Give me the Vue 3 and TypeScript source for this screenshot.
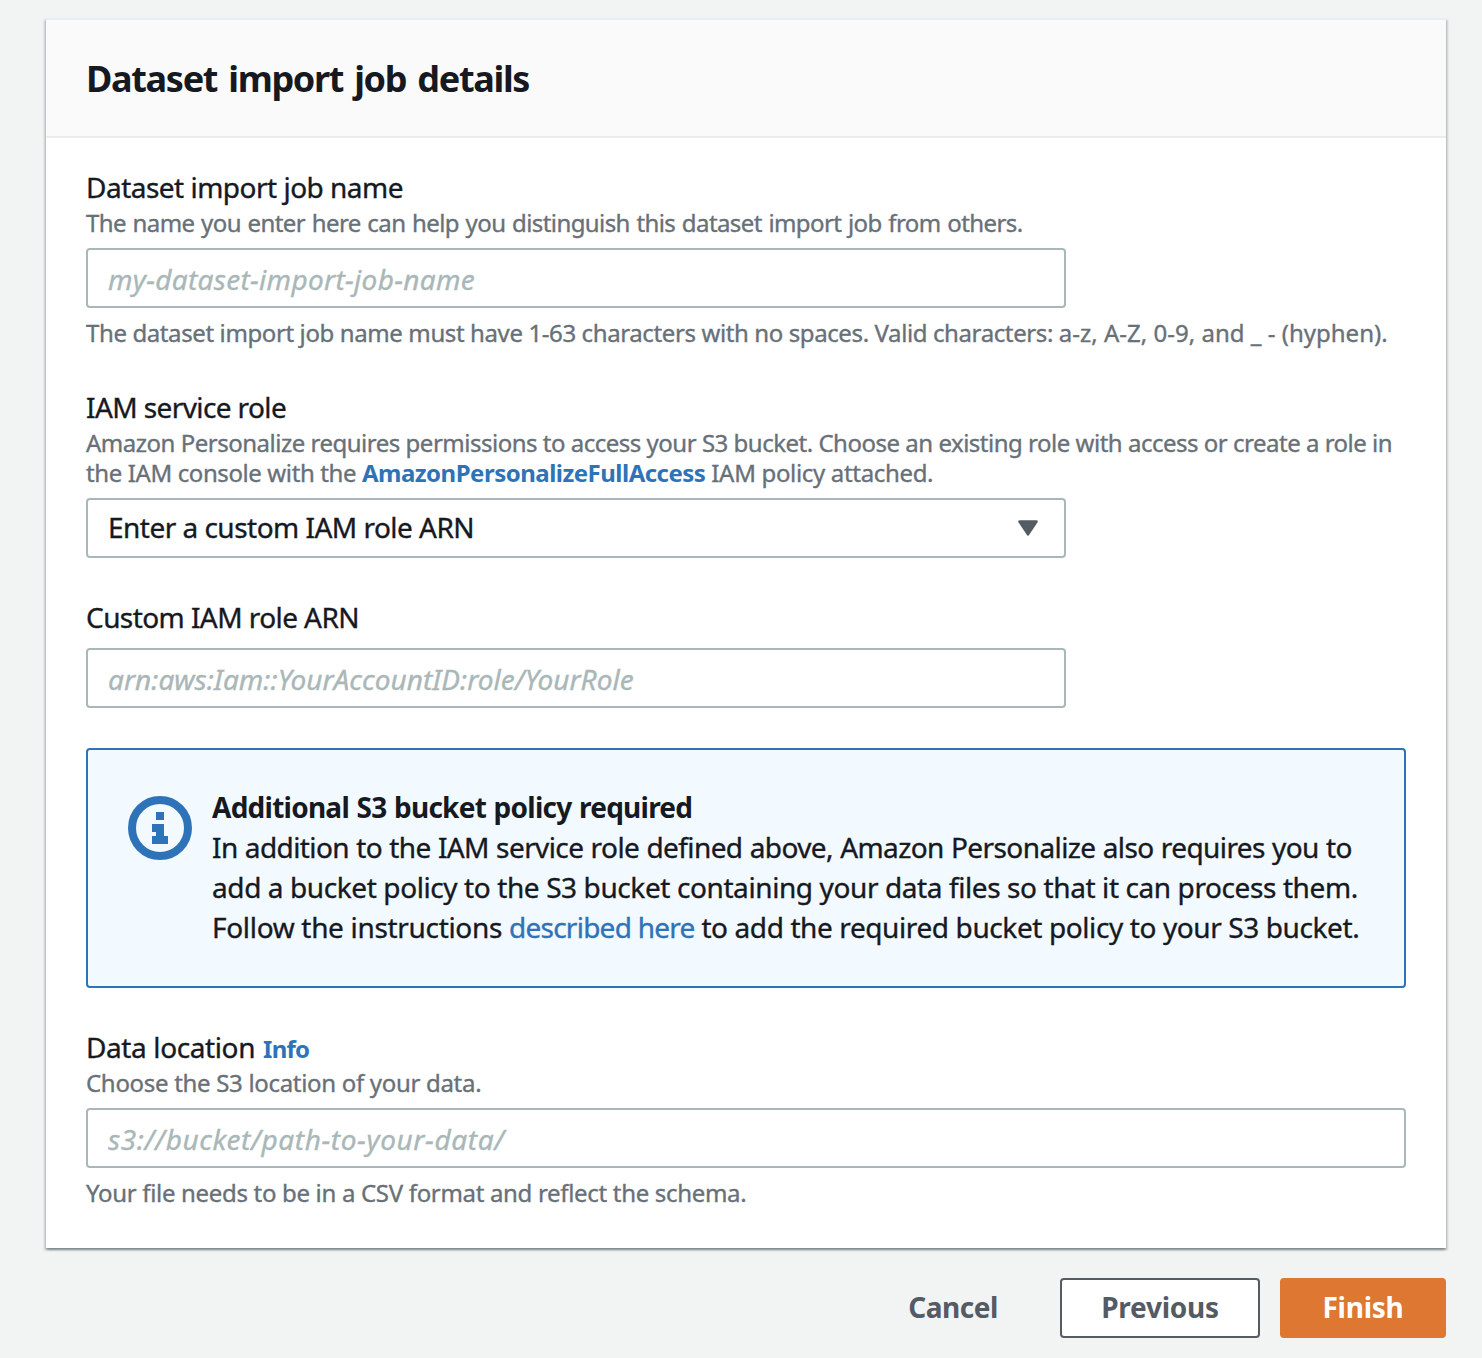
<script setup lang="ts">
import { ref } from 'vue'

const jobName = ref('')
const roleArn = ref('')
const dataLocation = ref('')
const roleOption = ref('Enter a custom IAM role ARN')
</script>

<template>
  <main class="page">
    <section class="panel">
      <header class="panel-header">
        <h2>Dataset import job details</h2>
      </header>

      <div class="panel-body">
        <div class="field">
          <label class="label name-label" for="job-name">Dataset import job name</label>
          <p class="desc name-desc">The name you enter here can help you distinguish this dataset import job from others.</p>
          <input id="job-name" v-model="jobName" class="control name-input" placeholder="my-dataset-import-job-name" />
          <p class="hint name-hint">The dataset import job name must have 1-63 characters with no spaces. Valid characters: <span>a-z, A-Z, 0-9, and _ - (hyphen).</span></p>
        </div>

        <div class="field">
          <span class="label role-label">IAM service role</span>
          <p class="desc">
            <span class="role-first">Amazon Personalize requires permissions to access your S3 bucket. Choose an existing role with access or create a role in</span><br />
            <span class="role-second">the IAM console with the </span><a class="policy-link">AmazonPersonalizeFullAccess</a><span class="role-third"> IAM policy attached.</span>
          </p>
          <button type="button" class="control select">
            <span>{{ roleOption }}</span>
            <svg width="20" height="16" viewBox="0 0 20 16" aria-hidden="true">
              <path d="M1.5 1.5H18.5L10 14.3Z" fill="#545b64" stroke="#545b64" stroke-width="2.6" stroke-linejoin="round" />
            </svg>
          </button>
        </div>

        <div class="field">
          <label class="label arn-label" for="role-arn">Custom IAM role ARN</label>
          <input id="role-arn" v-model="roleArn" class="control arn-input" placeholder="arn:aws:Iam::YourAccountID:role/YourRole" />
        </div>

        <aside class="alert">
          <svg class="alert-icon" width="64" height="64" viewBox="0 0 64 64" aria-hidden="true">
            <circle cx="32" cy="32" r="28" fill="none" stroke="#2e73b8" stroke-width="8" />
            <path d="M28 16h8v8h-8zM24 28h12v12h4v8H24v-8h4v-4h-4z" fill="#2e73b8" />
          </svg>
          <div class="alert-text">
            <strong>Additional S3 bucket policy required</strong>
            <p class="alert-one">In addition to the IAM service role defined above, Amazon Personalize also requires you to</p>
            <p class="alert-two">add a bucket policy to the S3 bucket containing your data files so that it can process them.</p>
            <p><span class="follow">Follow the instructions </span><a class="here-link">described here</a><span class="to-add"> to add the required bucket policy to your S3 bucket.</span></p>
          </div>
        </aside>

        <div class="field">
          <label class="label data-label" for="data-location"><span>Data location</span><a class="info">Info</a></label>
          <p class="desc data-desc">Choose the S3 location of your data.</p>
          <input id="data-location" v-model="dataLocation" class="control wide data-input" placeholder="s3://bucket/path-to-your-data/" />
          <p class="hint data-hint">Your file needs to be in a CSV format and reflect the schema.</p>
        </div>
      </div>
    </section>

    <footer class="actions">
      <button type="button" class="btn link">Cancel</button>
      <button type="button" class="btn normal">Previous</button>
      <button type="button" class="btn primary">Finish</button>
    </footer>
  </main>
</template>

<style>
body {
  background: #f2f4f4;
}
</style>

<style scoped>
.page {
  box-sizing: border-box;
  width: 1482px;
  height: 1358px;
  padding: 18px 36px 0 46px;
  background: #f2f4f3;
  color: #16191f;
  font: 28px/40px 'Noto Sans', sans-serif;
  white-space: nowrap;
}
h2,
p {
  margin: 0;
}
.panel {
  border-top: 2px solid #eaeded;
  background: #fff;
  box-shadow:
    0 2px 2px rgba(0, 28, 36, 0.3),
    2px 2px 2px rgba(0, 28, 36, 0.15),
    -2px 2px 2px rgba(0, 28, 36, 0.15);
}
.panel-header {
  box-sizing: border-box;
  height: 118px;
  padding: 35px 40px 0;
  background: #fafafa;
  border-bottom: 2px solid #eaeded;
}
h2 {
  font-size: 36px;
  line-height: 48px;
  font-weight: 700;
  letter-spacing: -1.31px;
  word-spacing: 3px;
}
.panel-body {
  display: flex;
  flex-direction: column;
  gap: 40px;
  padding: 30px 40px 40px;
  -webkit-text-stroke: 0.35px;
}
.field {
  display: flex;
  flex-direction: column;
  align-items: flex-start;
}
.label {
  display: block;
  height: 40px;
  line-height: 38px;
}
.desc,
.hint {
  color: #687078;
  font-size: 24px;
  line-height: 30px;
}
.hint {
  margin-top: 10px;
}
.control {
  box-sizing: border-box;
  width: 980px;
  height: 60px;
  margin: 10px 0 0;
  padding: 2px 20px 0;
  border: 2px solid #aab7b8;
  border-radius: 4px;
  background: #fff;
  color: #16191f;
  font: inherit;
  outline: none;
}
.control.wide {
  width: 1320px;
}
.control::placeholder {
  color: #aab7b8;
  font-style: italic;
  opacity: 1;
  -webkit-text-stroke: 0.35px;
}
.select {
  display: flex;
  align-items: center;
  justify-content: space-between;
  padding: 0 26px 0 20px;
  letter-spacing: -0.52px;
  -webkit-text-stroke: 0.35px;
}
.select span {
  height: 40px;
  line-height: 38px;
}
a {
  color: #2e73b8;
}
.policy-link,
.info {
  font-weight: 700;
  -webkit-text-stroke: 0;
}
.alert {
  box-sizing: border-box;
  display: flex;
  gap: 20px;
  height: 240px;
  padding: 38px 40px;
  border: 2px solid #2e73b8;
  border-radius: 4px;
  background: #f2f9ff;
}
.alert-icon {
  flex: none;
  margin-top: 8px;
}
.alert-text {
  margin-top: -1px;
}
.alert-text strong {
  display: block;
  letter-spacing: -0.75px;
  word-spacing: 1px;
  -webkit-text-stroke: 0;
}
.info {
  margin-left: 8px;
  font-size: 24px;
  letter-spacing: -0.75px;
}
.name-label { letter-spacing: -0.51px; }
.name-desc { letter-spacing: -0.594px; word-spacing: 1px; }
.name-input { letter-spacing: 0.3px; }
.name-hint { letter-spacing: -0.388px; }
.name-hint span { letter-spacing: 0.01px; }
.role-label { letter-spacing: -0.6px; }
.role-first { letter-spacing: -0.49px; }
.role-second { letter-spacing: -0.39px; }
.policy-link { letter-spacing: -0.507px; }
.role-third { letter-spacing: -0.33px; }
.arn-label { letter-spacing: -0.57px; }
.alert-one { letter-spacing: -0.59px; word-spacing: 0.5px; }
.alert-two { letter-spacing: -0.4px; }
.follow { letter-spacing: -0.32px; }
.here-link { letter-spacing: -0.757px; }
.to-add { letter-spacing: -0.395px; }
.data-label span { letter-spacing: -0.39px; }
.data-desc { letter-spacing: -0.31px; }
.data-input { letter-spacing: 0.6px; }
.data-hint { letter-spacing: -0.32px; }

.actions {
  display: flex;
  justify-content: flex-end;
  gap: 20px;
  margin-top: 30px;
}
.btn {
  box-sizing: border-box;
  height: 60px;
  padding: 0 0 2px;
  border: 2px solid transparent;
  border-radius: 4px;
  background: transparent;
  color: #545b64;
  font: inherit;
  font-weight: 700;
  letter-spacing: -0.25px;
}
.btn.link {
  width: 174px;
  letter-spacing: -0.5px;
}
.btn.normal {
  width: 200px;
  border-color: #545b64;
  background: #fff;
}
.btn.primary {
  width: 166px;
  background: #dd7732;
  border-color: #dd7732;
  color: #fff;
}
</style>
